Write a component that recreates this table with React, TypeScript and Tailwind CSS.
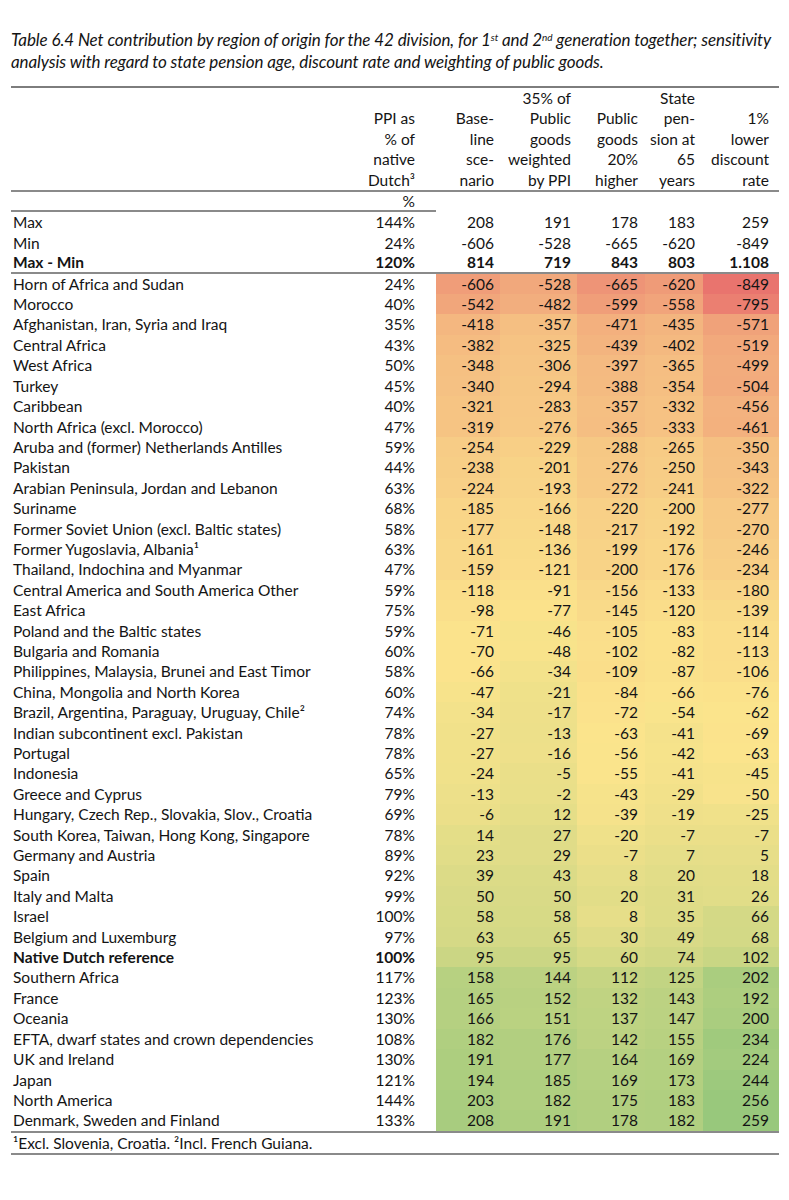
import React from "react";

type Row = {
  name: string;
  ppi: string;
  vals: number[];
  bold?: boolean;
};

const rows: Row[] = [
  { name: "Horn of Africa and Sudan", ppi: "24%", vals: [-606, -528, -665, -620, -849] },
  { name: "Morocco", ppi: "40%", vals: [-542, -482, -599, -558, -795] },
  { name: "Afghanistan, Iran, Syria and Iraq", ppi: "35%", vals: [-418, -357, -471, -435, -571] },
  { name: "Central Africa", ppi: "43%", vals: [-382, -325, -439, -402, -519] },
  { name: "West Africa", ppi: "50%", vals: [-348, -306, -397, -365, -499] },
  { name: "Turkey", ppi: "45%", vals: [-340, -294, -388, -354, -504] },
  { name: "Caribbean", ppi: "40%", vals: [-321, -283, -357, -332, -456] },
  { name: "North Africa (excl. Morocco)", ppi: "47%", vals: [-319, -276, -365, -333, -461] },
  { name: "Aruba and (former) Netherlands Antilles", ppi: "59%", vals: [-254, -229, -288, -265, -350] },
  { name: "Pakistan", ppi: "44%", vals: [-238, -201, -276, -250, -343] },
  { name: "Arabian Peninsula, Jordan and Lebanon", ppi: "63%", vals: [-224, -193, -272, -241, -322] },
  { name: "Suriname", ppi: "68%", vals: [-185, -166, -220, -200, -277] },
  { name: "Former Soviet Union (excl. Baltic states)", ppi: "58%", vals: [-177, -148, -217, -192, -270] },
  { name: "Former Yugoslavia, Albania¹", ppi: "63%", vals: [-161, -136, -199, -176, -246] },
  { name: "Thailand, Indochina and Myanmar", ppi: "47%", vals: [-159, -121, -200, -176, -234] },
  { name: "Central America and South America Other", ppi: "59%", vals: [-118, -91, -156, -133, -180] },
  { name: "East Africa", ppi: "75%", vals: [-98, -77, -145, -120, -139] },
  { name: "Poland and the Baltic states", ppi: "59%", vals: [-71, -46, -105, -83, -114] },
  { name: "Bulgaria and Romania", ppi: "60%", vals: [-70, -48, -102, -82, -113] },
  { name: "Philippines, Malaysia, Brunei and East Timor", ppi: "58%", vals: [-66, -34, -109, -87, -106] },
  { name: "China, Mongolia and North Korea", ppi: "60%", vals: [-47, -21, -84, -66, -76] },
  { name: "Brazil, Argentina, Paraguay, Uruguay, Chile²", ppi: "74%", vals: [-34, -17, -72, -54, -62] },
  { name: "Indian subcontinent excl. Pakistan", ppi: "78%", vals: [-27, -13, -63, -41, -69] },
  { name: "Portugal", ppi: "78%", vals: [-27, -16, -56, -42, -63] },
  { name: "Indonesia", ppi: "65%", vals: [-24, -5, -55, -41, -45] },
  { name: "Greece and Cyprus", ppi: "79%", vals: [-13, -2, -43, -29, -50] },
  { name: "Hungary, Czech Rep., Slovakia, Slov., Croatia", ppi: "69%", vals: [-6, 12, -39, -19, -25] },
  { name: "South Korea, Taiwan, Hong Kong, Singapore", ppi: "78%", vals: [14, 27, -20, -7, -7] },
  { name: "Germany and Austria", ppi: "89%", vals: [23, 29, -7, 7, 5] },
  { name: "Spain", ppi: "92%", vals: [39, 43, 8, 20, 18] },
  { name: "Italy and Malta", ppi: "99%", vals: [50, 50, 20, 31, 26] },
  { name: "Israel", ppi: "100%", vals: [58, 58, 8, 35, 66] },
  { name: "Belgium and Luxemburg", ppi: "97%", vals: [63, 65, 30, 49, 68] },
  { name: "Native Dutch reference", ppi: "100%", vals: [95, 95, 60, 74, 102], bold: true },
  { name: "Southern Africa", ppi: "117%", vals: [158, 144, 112, 125, 202] },
  { name: "France", ppi: "123%", vals: [165, 152, 132, 143, 192] },
  { name: "Oceania", ppi: "130%", vals: [166, 151, 137, 147, 200] },
  { name: "EFTA, dwarf states and crown dependencies", ppi: "108%", vals: [182, 176, 142, 155, 234] },
  { name: "UK and Ireland", ppi: "130%", vals: [191, 177, 164, 169, 224] },
  { name: "Japan", ppi: "121%", vals: [194, 185, 169, 173, 244] },
  { name: "North America", ppi: "144%", vals: [203, 182, 175, 183, 256] },
  { name: "Denmark, Sweden and Finland", ppi: "133%", vals: [208, 191, 178, 182, 259] },
];

const summary = [
  { name: "Max", ppi: "144%", vals: ["208", "191", "178", "183", "259"], bold: false },
  { name: "Min", ppi: "24%", vals: ["-606", "-528", "-665", "-620", "-849"], bold: false },
  { name: "Max - Min", ppi: "120%", vals: ["814", "719", "843", "803", "1.108"], bold: true },
];

// three-colour scale over all cells, midpoint at the median
const all = rows.flatMap((r) => r.vals).sort((a, b) => a - b);
const lo = all[0];
const hi = all[all.length - 1];
const mid = (all[all.length / 2 - 1] + all[all.length / 2]) / 2;

const RED = [233, 116, 110];
const YEL = [251, 228, 140];
const GRN = [152, 200, 124];

function mix(a: number[], b: number[], t: number) {
  const c = a.map((v, i) => Math.round(v + (b[i] - v) * t));
  return `rgb(${c[0]},${c[1]},${c[2]})`;
}

function scale(v: number) {
  if (v <= mid) return mix(RED, YEL, Math.pow((v - lo) / (mid - lo), 0.85));
  return mix(YEL, GRN, (v - mid) / (hi - mid));
}

const numCols = [
  "w-[64px] pr-[6px]",
  "w-[77px] pr-[6px]",
  "w-[68px] pr-[7px]",
  "w-[58px] pr-[8px]",
  "w-[76px] pr-[10px]",
];

const headers: React.ReactNode[] = [
  <>Base-<br />line<br />sce-<br />nario</>,
  <>35% of<br />Public<br />goods<br />weighted<br />by PPI</>,
  <>Public<br />goods<br />20%<br />higher</>,
  <>State<br />pen-<br />sion at<br />65<br />years</>,
  <>1%<br />lower<br />discount<br />rate</>,
];

export default function App() {
  const tdRow = "h-[20.4px] p-0 leading-[20.4px] whitespace-nowrap";
  const tdRule = "h-[18.4px] p-0 leading-[18.4px] whitespace-nowrap";
  return (
    <div className="min-h-[1200px] w-[789px] bg-white pl-[11px] pt-[29px] text-[15.5px] text-[#141414] [font-family:Lato,'Open_Sans',sans-serif]">
      <p className="whitespace-nowrap text-[17px] italic leading-[22px] tracking-[-0.1px]">
        Table 6.4 Net contribution by region of origin for the 42 division, for 1
        <sup className="text-[10px] leading-none">st</sup> and 2<sup className="text-[10px] leading-none">nd</sup> generation together; sensitivity
        <br />
        analysis with regard to state pension age, discount rate and weighting of public goods.
      </p>

      <table className="mt-[13px] w-[768px] table-fixed border-collapse border-t-2 border-[#7d7d7d]">
        <colgroup>
          <col className="w-[330px]" />
          <col className="w-[95px]" />
          <col className="w-[64px]" />
          <col className="w-[77px]" />
          <col className="w-[68px]" />
          <col className="w-[58px]" />
          <col className="w-[76px]" />
        </colgroup>
        <thead>
          <tr className="border-b-2 border-[#8a8a8a]">
            <th className="p-0" />
            <th className="p-0 pr-[21px] text-right align-bottom font-normal leading-[20.4px]">
              PPI as<br />% of<br />native<br />Dutch³
            </th>
            {headers.map((h, i) => (
              <th key={i} className={`${numCols[i]} p-0 text-right align-bottom font-normal leading-[20.4px]`}>
                {h}
              </th>
            ))}
          </tr>
        </thead>
        <tbody>
          <tr>
            <td className={`${tdRule} border-b-2 border-[#8a8a8a]`} />
            <td className={`${tdRule} border-b-2 border-[#8a8a8a] pr-[21px] text-right`}>%</td>
            <td colSpan={5} className={tdRule} />
          </tr>
          {summary.map((r, ri) => {
            const last = ri === summary.length - 1;
            const base = last ? tdRule : tdRow;
            const b = r.bold ? "font-bold" : "";
            return (
              <tr key={r.name} className={last ? "border-b-2 border-[#8a8a8a]" : ""}>
                <td className={`${base} pl-[2px] ${b}`}>{r.name}</td>
                <td className={`${base} pr-[21px] text-right ${b}`}>{r.ppi}</td>
                {r.vals.map((v, i) => (
                  <td key={i} className={`${base} ${numCols[i]} text-right ${b}`}>
                    {v}
                  </td>
                ))}
              </tr>
            );
          })}
          {rows.map((r, ri) => {
            const b = r.bold ? "font-bold" : "";
            return (
              <tr key={r.name} className={ri === rows.length - 1 ? "border-b-2 border-[#8a8a8a]" : ""}>
                <td className={`${tdRow} pl-[2px] ${b}`}>{r.name}</td>
                <td className={`${tdRow} pr-[21px] text-right ${b}`}>{r.ppi}</td>
                {r.vals.map((v, i) => (
                  <td key={i} className={`${tdRow} ${numCols[i]} text-right`} style={{ backgroundColor: scale(v) }}>
                    {v}
                  </td>
                ))}
              </tr>
            );
          })}
          <tr className="border-b-2 border-[#8a8a8a]">
            <td colSpan={7} className={`${tdRow} pl-[2px]`}>
              ¹Excl. Slovenia, Croatia. ²Incl. French Guiana.
            </td>
          </tr>
        </tbody>
      </table>
    </div>
  );
}
